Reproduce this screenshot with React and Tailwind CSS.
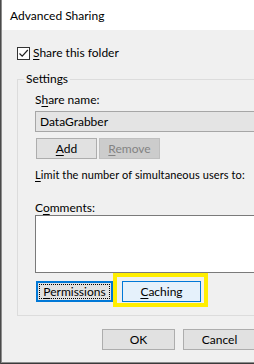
import React from 'react';

const font = { fontFamily: 'Lato, "Noto Sans", sans-serif' };

const Key = ({ children }) => <span className="underline underline-offset-2 decoration-1">{children}</span>;

const Btn = ({ children, className = '' }) => (
    <div className={`h-[21px] flex items-center justify-center border border-[#adadad] bg-[#e1e1e1] text-black ${className}`}>
        {children}
    </div>
);

export default function App() {
    return (
        <div className="w-[254px] h-[364px] overflow-hidden flex bg-[#3a3a3a] text-[12px] leading-[16px] text-black" style={font}>
            <div className="w-[1px] shrink-0 bg-[#4a4a4a]" />
            {/* Dialog */}
            <div className="w-[300px] shrink-0 h-[363px] flex flex-col border-l border-b border-[#8c8c8c] bg-[#f0f0f0]">
                {/* Title bar */}
                <div className="h-[30px] bg-white pl-[8px] pt-[8px]">Advanced Sharing</div>

                {/* Share checkbox */}
                <div className="flex items-center mt-[15px] ml-[15px] h-[16px]">
                    <div className="w-[13px] h-[13px] border border-[#333] bg-white flex items-center justify-center">
                        <svg width="11" height="11" viewBox="0 0 11 11">
                            <path d="M1.5 5.5 L4.2 8.2 L9.8 2" fill="none" stroke="#222" strokeWidth="1.2" />
                        </svg>
                    </div>
                    <span className="ml-[3px]"><Key>S</Key>hare this folder</span>
                </div>

                {/* Settings group */}
                <div className="relative mt-[18px] ml-[15px] h-[237px] border border-[#dcdcdc] pl-[17px] pt-[12px]">
                    <span className="absolute left-[6px] top-[-9px] px-[2px] bg-[#f0f0f0]">Settings</span>

                    <div className="h-[16px]">S<Key>h</Key>are name:</div>
                    <div className="mt-[3px] h-[21px] border border-[#a6a6a6] bg-[#e4e4e4] pl-[4px] flex items-center">DataGrabber</div>

                    <div className="flex gap-[2px] mt-[6px] ml-[1px]">
                        <Btn className="w-[61px]"><span><Key>A</Key>dd</span></Btn>
                        <div className="w-[61px] h-[21px] flex items-center justify-center border border-[#bfbfbf] bg-[#cccccc] text-[#838383]">
                            <span><Key>R</Key>emove</span>
                        </div>
                    </div>

                    <div className="mt-[8px] h-[16px] text-[11px] tracking-[0.1px]"><Key>L</Key>imit the number of simultaneous users to:</div>

                    <div className="mt-[17px] h-[16px]">C<Key>o</Key>mments:</div>
                    <div className="mt-[-1px] h-[58px] border border-[#7a7a7a] bg-white" />

                    <div className="relative flex mt-[8px] ml-[1px]">
                        <div className="w-[77px] h-[21px] border-2 border-[#0078d7] bg-[#e1e1e1] p-[1px]">
                            <div className="h-full border border-dotted border-black flex items-center justify-center">
                                <span><Key>P</Key>ermissions</span>
                            </div>
                        </div>
                        <div className="ml-[9px] w-[79px] h-[21px] border border-[#0078d7] bg-[#e5f1fb] flex items-center justify-center">
                            <span><Key>C</Key>aching</span>
                        </div>
                        {/* highlight annotation */}
                        <div className="absolute left-[77px] top-[-8px] w-[95px] h-[34px] border-4 border-[#ffee00]" />
                    </div>
                </div>

                {/* Footer buttons */}
                <div className="flex gap-[8px] mt-[13px] ml-[100px]">
                    <Btn className="w-[73px]">OK</Btn>
                    <Btn className="w-[73px]">Cancel</Btn>
                </div>
            </div>
        </div>
    );
}
